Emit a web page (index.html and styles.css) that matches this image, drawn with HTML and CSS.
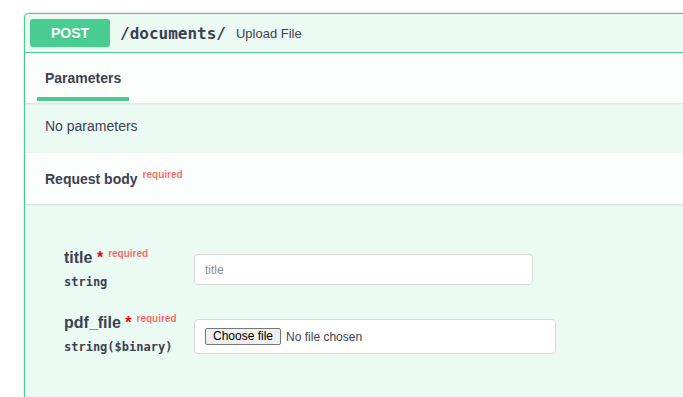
FILE: index.html
```html
<!DOCTYPE html>
<html lang="en">
<head>
    <meta charset="UTF-8">
    <meta name="viewport" content="width=device-width, initial-scale=1.0">
    <title>POST /documents/</title>
    <link rel="stylesheet" href="styles.css">
</head>
<body>
    <div class="wrapper">
        <div class="opblock">
            <div class="summary">
                <span class="method">POST</span>
                <span class="path">/documents/</span>
                <span class="summary-desc">Upload File</span>
            </div>

            <div class="section-header">
                <h4 class="tab"><span>Parameters</span></h4>
            </div>
            <div class="description">
                <p>No parameters</p>
            </div>

            <div class="section-header body-header">
                <h4 class="section-title">Request body<span class="required">required</span></h4>
            </div>
            <div class="body-params">
                <div class="param-row">
                    <div class="param-name">
                        <div class="name">title<span class="star">&nbsp;*</span><span class="required">required</span></div>
                        <div class="type">string</div>
                    </div>
                    <input class="text-input" type="text" placeholder="title">
                </div>
                <div class="param-row">
                    <div class="param-name">
                        <div class="name">pdf_file<span class="star">&nbsp;*</span><span class="required">required</span></div>
                        <div class="type">string($binary)</div>
                    </div>
                    <div class="file-input">
                        <label class="file-button">Choose file<input type="file" name="pdf_file"></label>
                        <span class="file-name">No file chosen</span>
                    </div>
                </div>
            </div>
        </div>
    </div>
</body>
</html>
```

FILE: styles.css
```css
body {
    margin: 0;
    padding: 0;
    background: white;
    font-family: "Liberation Sans", Arial, sans-serif;
    color: #3b4151;
    overflow: hidden;
}

.wrapper {
    padding: 13px 0 0 24px;
    width: 760px;
}

.opblock {
    background: rgba(73, 204, 144, 0.1);
    border: 1px solid #49cc90;
    border-radius: 4px;
    box-shadow: 0 0 3px rgba(0, 0, 0, 0.19);
    height: 420px;
}

/* summary bar */
.summary {
    display: flex;
    align-items: center;
    padding: 5px;
    border-bottom: 1px solid #49cc90;
}

.method {
    min-width: 80px;
    padding: 6px 0;
    border-radius: 3px;
    background: #49cc90;
    color: white;
    font-size: 14px;
    font-weight: bold;
    line-height: 16px;
    text-align: center;
    text-shadow: 0 1px 0 rgba(0, 0, 0, 0.1);
}

.path {
    padding: 0 10px;
    font-family: "DejaVu Sans Mono", monospace;
    font-size: 16px;
    font-weight: bold;
}

.summary-desc {
    font-size: 13px;
}

/* section headers */
.section-header {
    display: flex;
    align-items: center;
    min-height: 50px;
    padding: 0 20px;
    background: rgba(255, 255, 255, 0.8);
    box-shadow: 0 1px 2px rgba(0, 0, 0, 0.1);
    position: relative;
}

.body-header {
    min-height: 51px;
}

.section-header h4 {
    margin: 0;
    font-size: 14px;
    line-height: 17px;
}

.tab span {
    position: relative;
}

.tab span:after {
    content: "";
    position: absolute;
    left: -10%;
    bottom: -15px;
    width: 120%;
    height: 4px;
    background: #49cc90;
}

.section-title {
    position: relative;
    top: 1px;
}

.required {
    position: relative;
    top: -6px;
    padding: 5px;
    font-size: 10px;
    font-weight: bold;
    color: rgba(255, 0, 0, 0.6);
}

.description {
    padding: 15px 20px 18px;
}

.description p {
    margin: 0;
    font-size: 14px;
    line-height: 17px;
}

/* request body form */
.body-params {
    padding: 44px 0 0 39px;
    display: flex;
    flex-direction: column;
    gap: 23px;
}

.param-row {
    display: flex;
    align-items: flex-start;
}

.param-name {
    width: 130px;
}

.name {
    font-size: 16px;
    font-weight: bold;
    line-height: 19px;
}

.star {
    color: red;
}

.type {
    margin-top: 6px;
    font-family: "DejaVu Sans Mono", monospace;
    font-size: 12px;
    font-weight: bold;
    line-height: 15px;
}

.text-input,
.file-input {
    margin-top: 6px;
    box-sizing: border-box;
    background: white;
    border: 1px solid #d9d9d9;
    border-radius: 4px;
    font-family: "Liberation Sans", Arial, sans-serif;
    font-size: 12px;
    color: #3b4151;
}

.text-input {
    width: 339px;
    height: 31px;
    padding: 5px 10px;
    outline: none;
}

.text-input::placeholder {
    color: #8a8d95;
}

.file-input {
    width: 362px;
    height: 35px;
    padding: 0 10px;
    display: flex;
    align-items: center;
    gap: 5px;
}

.file-button {
    box-sizing: border-box;
    height: 17px;
    padding: 0 7px;
    line-height: 15px;
    background: #efefef;
    border: 1px solid #767676;
    border-radius: 2px;
    color: black;
    cursor: pointer;
}

.file-button input {
    display: none;
}

.file-name {
    color: #3b4151;
}
```
